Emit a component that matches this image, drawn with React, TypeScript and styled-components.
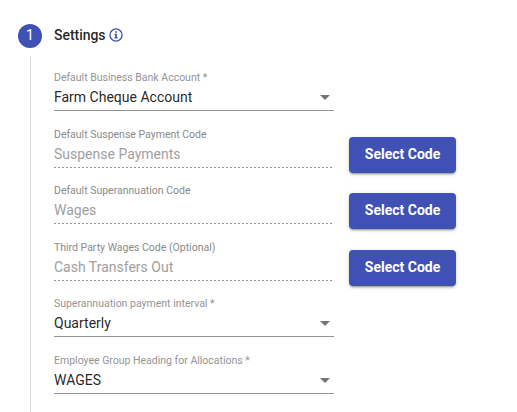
import React from "react";
import styled, { createGlobalStyle } from "styled-components";

const GlobalStyle = createGlobalStyle`
  *, *::before, *::after { box-sizing: border-box; }
  body { margin: 0; background: #fff; overflow: hidden; }
`;

const Stepper = styled.main`
  width: 517px;
  height: 412px;
  padding: 24px 18px 0;
  display: flex;
  flex-direction: column;
  font-family: Roboto, sans-serif;
  color: rgba(0, 0, 0, 0.87);
`;

const StepHeader = styled.header`
  display: flex;
  align-items: center;
  height: 24px;
`;

const StepNumber = styled.span`
  width: 24px;
  height: 24px;
  border-radius: 50%;
  background: #3f51b5;
  color: #fff;
  font-size: 14px;
  line-height: 23px;
  text-align: center;
`;

const StepTitle = styled.h2`
  width: 51px;
  margin: 0 4px 2px 12px;
  font-size: 14px;
  font-weight: 500;
  line-height: 20px;
  letter-spacing: -0.04px;
  white-space: nowrap;
`;

const InfoIcon = styled.svg`
  width: 14px;
  height: 14px;
  margin-bottom: 2px;
`;

const StepContent = styled.section`
  flex: 1;
  margin: 8px 0 0 12px;
  padding-left: 23px;
  border-left: 1px solid #dedede;
`;

const FieldRow = styled.div<{ $height: number }>`
  display: flex;
  align-items: flex-end;
  gap: 15px;
  height: ${({ $height }) => $height}px;
`;

const Field = styled.div<{ $disabled: boolean }>`
  width: 280px;
  height: 42px;
  padding-bottom: 4px;
  display: flex;
  flex-direction: column;
  justify-content: flex-end;
  background: ${({ $disabled }) =>
    $disabled
      ? "repeating-linear-gradient(to right, #949494 0 2px, transparent 2px 4px) left bottom / 278px 1px no-repeat"
      : "linear-gradient(#949494, #949494) left bottom / 100% 1px no-repeat"};
`;

const Label = styled.label<{ $disabled: boolean }>`
  font-size: 10.5px;
  line-height: 14px;
  white-space: nowrap;
  color: ${({ $disabled }) => ($disabled ? "#8a8a8a" : "#949494")};
`;

const Value = styled.div<{ $disabled: boolean }>`
  display: flex;
  align-items: center;
  justify-content: space-between;
  height: 20px;
  margin-top: 2px;
  padding-right: 4px;
  font-size: 14px;
  line-height: 20px;
  color: ${({ $disabled }) => ($disabled ? "#a0a0a0" : "rgba(0, 0, 0, 0.87)")};
`;

const Arrow = styled.span`
  border: 5px solid transparent;
  border-top-color: #757575;
  border-bottom: 0;
`;

const CodeButton = styled.button`
  width: 107px;
  height: 36px;
  margin-bottom: -5px;
  padding: 0 0 2px;
  border: 0;
  border-radius: 4px;
  background: #3f51b5;
  color: #fff;
  font: 700 14px/34px Roboto, sans-serif;
  white-space: nowrap;
  box-shadow: 0 3px 1px -2px rgba(0, 0, 0, 0.2), 0 2px 2px rgba(0, 0, 0, 0.14),
    0 1px 5px rgba(0, 0, 0, 0.12);
`;

type Setting = { label: string; value: string; code?: boolean; height: number };

const settings: Setting[] = [
  { label: "Default Business Bank Account *", value: "Farm Cheque Account", height: 55 },
  { label: "Default Suspense Payment Code", value: "Suspense Payments", code: true, height: 57 },
  { label: "Default Superannuation Code", value: "Wages", code: true, height: 56 },
  { label: "Third Party Wages Code (Optional)", value: "Cash Transfers Out", code: true, height: 57 },
  { label: "Superannuation payment interval *", value: "Quarterly", height: 56 },
  { label: "Employee Group Heading for Allocations *", value: "WAGES", height: 57 },
];

export default function App() {
  return (
    <>
      <GlobalStyle />
      <Stepper>
        <StepHeader>
          <StepNumber>1</StepNumber>
          <StepTitle>Settings</StepTitle>
          <InfoIcon viewBox="0 0 14 14" aria-label="Information">
            <circle cx="7" cy="7" r="6.1" fill="none" stroke="#3f51b5" strokeWidth="1.3" />
            <path d="M6.2 3.2h1.7v1.5H6.2zM5.4 5.8h2.5v3.4h.8v1.2H5.4V9.2h.8V7h-.8z" fill="#3f51b5" />
          </InfoIcon>
        </StepHeader>
        <StepContent>
          {settings.map(({ label, value, code = false, height }) => (
            <FieldRow key={label} $height={height}>
              <Field $disabled={code}>
                <Label $disabled={code}>{label}</Label>
                <Value $disabled={code}>
                  {value}
                  {!code && <Arrow />}
                </Value>
              </Field>
              {code && <CodeButton type="button">Select Code</CodeButton>}
            </FieldRow>
          ))}
        </StepContent>
      </Stepper>
    </>
  );
}
